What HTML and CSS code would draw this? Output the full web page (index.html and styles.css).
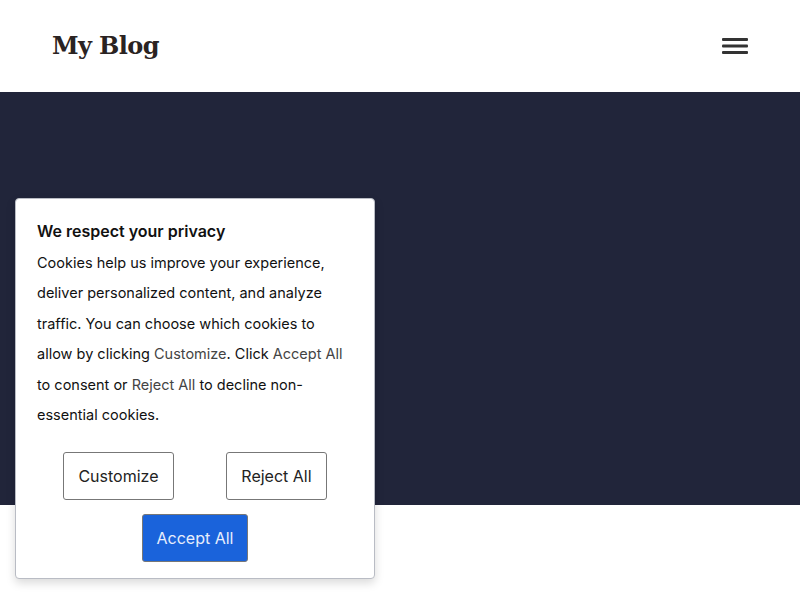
FILE: index.html
```html
<!DOCTYPE html>
<html lang="en">
<head>
<meta charset="utf-8">
<title>My Blog</title>
<link rel="stylesheet" href="styles.css">
</head>
<body>
<header class="site-header">
  <div class="logo">My Blog</div>
  <button class="menu" aria-label="Menu">
    <svg width="26" height="18" viewBox="0 0 26 18"><rect x="0" y="1" width="26" height="3" rx="1" fill="#333"/><rect x="0" y="7.5" width="26" height="3" rx="1" fill="#333"/><rect x="0" y="14" width="26" height="3" rx="1" fill="#333"/></svg>
  </button>
</header>
<section class="hero"></section>
<div class="cookie">
  <h2 class="cookie-title">We respect your privacy</h2>
  <p class="cookie-text">Cookies help us improve your experience, deliver personalized content, and analyze traffic. You can choose which cookies to allow by clicking <span class="hl">Customize</span>. Click <span class="hl">Accept All</span> to consent or <span class="hl">Reject All</span> to decline non-essential cookies.</p>
  <div class="actions">
    <button class="btn">Customize</button>
    <button class="btn">Reject All</button>
    <button class="btn primary">Accept All</button>
  </div>
</div>
</body>
</html>
```
FILE: styles.css
```css
* { box-sizing: border-box; }
html, body { margin: 0; padding: 0; background: #fff; }
body { font-family: "Inter", "Roboto", sans-serif; }
.site-header {
  height: 92px;
  display: flex;
  align-items: center;
  justify-content: space-between;
  padding: 0 52px 0 52px;
}
.logo {
  font-family: "DejaVu Serif", "Liberation Serif", serif;
  font-weight: bold;
  font-size: 24px;
  color: #2a2322;
  letter-spacing: -0.6px;
  margin-top: -1px;
}
.menu {
  background: none;
  border: 0;
  padding: 0;
  width: 26px;
  height: 18px;
  display: flex;
}
.hero {
  height: 413px;
  background: #21253a;
}
.cookie {
  position: absolute;
  left: 15px;
  top: 198px;
  width: 360px;
  background: #fff;
  border: 1px solid #b9bcc4;
  border-radius: 4px;
  box-shadow: 0 4px 10px rgba(0,0,0,0.15);
  padding: 19px 21px 16px 21px;
}
.cookie-title {
  margin: 0 0 4px 0;
  font-size: 16px;
  font-weight: 600;
  color: #111;
  line-height: 26px;
}
.cookie-text {
  margin: 0;
  font-size: 14.5px;
  line-height: 30.4px;
  color: #111;
}
.hl { color: #444; }
.actions {
  display: flex;
  flex-wrap: wrap;
  justify-content: space-around;
  row-gap: 14px;
  margin-top: 22px;
}
.btn {
  font-family: "Inter", "Roboto", sans-serif;
  font-size: 16px;
  color: #222;
  background: #fff;
  border: 1px solid #777;
  border-radius: 3px;
  height: 48px;
  padding: 0 14px;
}
.btn.primary {
  background: #1a63db;
  color: #e8eefc;
}
```
